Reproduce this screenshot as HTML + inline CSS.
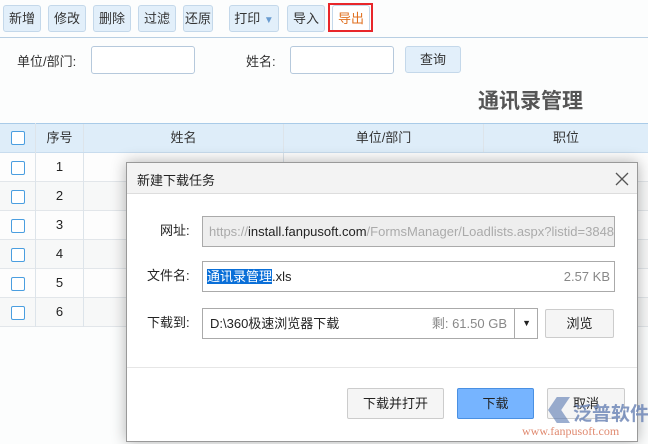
<!DOCTYPE html>
<html><head><meta charset="utf-8"><style>
*{box-sizing:border-box;margin:0;padding:0}
body{width:648px;height:444px;overflow:hidden;background:#fcfdfd;font-family:"Liberation Sans","Noto Sans CJK SC",sans-serif;font-size:13px;color:#333;position:relative}
.a{position:absolute}
.tb{position:absolute;top:5px;height:27px;background:#e2effa;border:1px solid #c4d8ea;border-radius:3px;text-align:center;line-height:25px;font-size:13px;color:#333}
.inp{position:absolute;background:#fff;border:1px solid #b6c9dc;border-radius:3px}
.cell{position:absolute;border-right:1px solid #dde4ea;text-align:center;line-height:28px}
.cb{position:absolute;left:11px;width:14px;height:14px;border:1.5px solid #4a9ee0;border-radius:2px;background:#fff}
.d{color:#222;height:31px;line-height:29px}
.btn{position:absolute;top:388px;height:31px;border:1px solid #ccc;border-radius:2px;background:#f5f5f5;text-align:center;line-height:29px;font-size:13px;color:#222}
</style></head><body>
<div class="tb" style="left:3px;width:38px">新增</div>
<div class="tb" style="left:48px;width:38px">修改</div>
<div class="tb" style="left:93px;width:38px">删除</div>
<div class="tb" style="left:138px;width:38px">过滤</div>
<div class="tb" style="left:183px;width:30px">还原</div>
<div class="tb" style="left:229px;width:50px">打印 <span style="color:#6a9cd0;font-size:10px">▼</span></div>
<div class="tb" style="left:287px;width:38px">导入</div>
<div class="tb" style="left:332px;width:38px;background:#fff;color:#e07020">导出</div>
<div class="a" style="left:328px;top:3px;width:45px;height:29px;border:2px solid #e8262a"></div>
<div class="a" style="left:0;top:37px;width:648px;height:1px;background:#b8cfe3"></div>
<div class="a" style="left:17px;top:51px">单位/部门:</div>
<div class="inp" style="left:91px;top:46px;width:104px;height:28px"></div>
<div class="a" style="left:246px;top:51px">姓名:</div>
<div class="inp" style="left:290px;top:46px;width:104px;height:28px"></div>
<div class="tb" style="left:405px;top:46px;width:56px;height:27px">查询</div>
<div class="a" style="left:478px;top:85px;font-size:21px;font-weight:bold;color:#555">通讯录管理</div>
<div class="a" style="left:0;top:123px;width:648px;height:30px;background:#deedf9;border-top:1px solid #a9cbe8;border-bottom:1px solid #c8dcee"></div>
<div class="cb" style="top:131px"></div>
<div class="cell" style="left:0;top:123px;width:36px;height:30px"></div>
<div class="cell" style="left:36px;top:124px;width:48px">序号</div>
<div class="cell" style="left:84px;top:124px;width:200px">姓名</div>
<div class="cell" style="left:284px;top:124px;width:200px">单位/部门</div>
<div class="cell" style="left:484px;top:124px;width:164px;border:0">职位</div>
<div id="rows"></div>
<script>
var h='';for(var i=0;i<6;i++){var t=153+i*29;h+='<div class="a" style="left:0;top:'+t+'px;width:648px;height:29px;border-bottom:1px solid #e2e6ea;background:'+(i%2?'#f7f8f8':'#fdfdfd')+'"></div><div class="cb" style="top:'+(t+8)+'px"></div><div class="cell" style="left:0;top:'+t+'px;width:36px;height:29px"></div><div class="cell" style="left:36px;top:'+t+'px;width:48px;height:29px;color:#222">'+(i+1)+'</div><div class="cell" style="left:84px;top:'+t+'px;width:200px;height:29px"></div>';}document.getElementById('rows').innerHTML=h;
</script>
<div class="a" style="left:126px;top:162px;width:512px;height:280px;background:#fff;border:1px solid #999;box-shadow:0 0 14px rgba(0,0,0,.3)">
 <div class="a" style="left:0;top:0;width:510px;height:31px;background:#f3f3f3;border-bottom:1px solid #ddd"></div>
 <div class="a" style="left:10px;top:7px;font-size:13px;color:#222">新建下载任务</div>
 <svg class="a" style="left:488px;top:9px" width="14" height="14"><path d="M1 1L13 13M13 1L1 13" stroke="#555" stroke-width="1.3"/></svg>
 <div class="a d" style="left:33px;top:53px">网址:</div>
 <div class="a" style="left:75px;top:53px;width:413px;height:31px;background:#eee;border:1px solid #aaa;padding-left:6px;line-height:29px;color:#aaa;overflow:hidden;white-space:nowrap">https://<span style="color:#222">install.fanpusoft.com</span>/FormsManager/Loadlists.aspx?listid=3848</div>
 <div class="a d" style="left:20px;top:98px">文件名:</div>
 <div class="a" style="left:75px;top:98px;width:413px;height:31px;border:1px solid #aaa;padding-left:4px;line-height:29px;color:#222"><span style="background:#0a6fd8;color:#fff">通讯录管理</span>.xls<span style="position:absolute;right:4px;color:#888">2.57 KB</span></div>
 <div class="a d" style="left:20px;top:145px">下载到:</div>
 <div class="a" style="left:75px;top:145px;width:336px;height:31px;border:1px solid #aaa;padding-left:7px;line-height:29px;color:#222">D:\360极速浏览器下载<span style="position:absolute;right:30px;color:#888">剩: 61.50 GB</span><span style="position:absolute;left:311px;top:0;width:1px;height:29px;background:#aaa"></span><span style="position:absolute;right:6px;font-size:9px;color:#222">▼</span></div>
 <div class="a" style="left:418px;top:146px;width:69px;height:29px;border:1px solid #ccc;border-radius:2px;background:#f5f5f5;text-align:center;line-height:27px;color:#222">浏览</div>
 <div class="a" style="left:0;top:204px;width:510px;height:1px;background:#e6e6e6"></div>
</div>
<div class="btn" style="left:347px;width:97px">下载并打开</div>
<div class="btn" style="left:457px;width:77px;background:#76b4ff;border-color:#4a90e2">下载</div>
<div class="btn" style="left:547px;width:78px">取消</div>
<div class="a" style="left:548px;top:397px;width:22px;height:26px;background:#5878b0;opacity:.6;clip-path:polygon(40% 0,100% 0,60% 50%,100% 100%,40% 100%,0 50%)"></div>
<div class="a" style="left:573px;top:399px;font-size:19px;font-weight:bold;color:#7088b8;opacity:.85;white-space:nowrap">泛普软件</div>
<div class="a" style="left:522px;top:424px;font-size:12px;color:#e08a70;font-family:'Liberation Serif',serif;white-space:nowrap">www.fanpusoft.com</div>
</body></html>
